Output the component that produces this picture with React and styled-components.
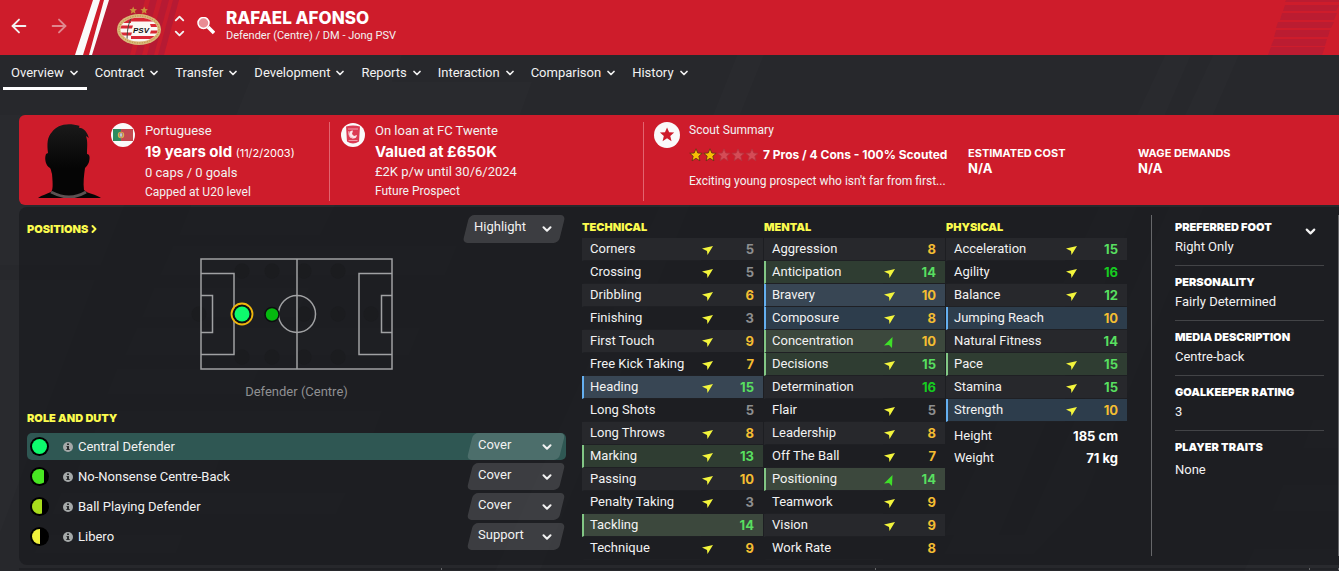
import React from 'react';
import styled, { createGlobalStyle } from 'styled-components';
import { ArrowLeft, ArrowRight, ChevronDown, ChevronRight, ChevronUp } from 'lucide-react';

const red = '#ce1c2b';
const yellow = '#fbfb4e';

const GlobalStyle = createGlobalStyle`
	* { box-sizing: border-box; }
	body {
		margin: 0;
		background: #27282c;
		color: #f2f2f2;
		font: 400 13px/20px Roboto, 'Liberation Sans', sans-serif;
		overflow: hidden;
	}
	h1, h2, h3, p, ul, dl, dd { margin: 0; padding: 0; }
	button, select {
		background: none;
		border: 0;
		padding: 0;
		color: inherit;
		font: inherit;
		cursor: pointer;
	}
	a { color: inherit; text-decoration: none; }
`;

const Page = styled.div`
	position: relative;
	min-height: 100vh;
`;

const Backdrop = styled.svg`
	position: absolute;
	top: 0;
	${props => props.$right ? 'right: 0;' : 'left: 0;'}
	pointer-events: none;
`;

/* Header */

const Header = styled.header`
	position: relative;
	height: 55px;
	background: ${red};
	overflow: hidden;
`;

const HeaderRow = styled.div`
	position: relative;
	display: flex;
	align-items: center;
	height: 100%;
	padding-left: 8px;
`;

const IconButton = styled.button`
	display: flex;
	opacity: ${props => props.$dim ? 0.5 : 1};
`;

const History = styled.div`
	display: flex;
	gap: 18px;
	margin-right: 47px;
	padding-bottom: 4px;
`;

const Stepper = styled.div`
	display: flex;
	flex-direction: column;
	margin: 0 10px 0 11px;
	padding-bottom: 4px;
`;

const Title = styled.div`
	margin-left: 11px;
	padding-bottom: 4px;
`;

const Name = styled.h1`
	font: 800 17px/20px Inter, 'Liberation Sans', sans-serif;
	color: #fff;
`;

const Subtitle = styled.p`
	font-size: 11px;
	line-height: 16px;
`;

/* Tabs */

const Tabs = styled.nav`
	position: relative;
	display: flex;
	height: 60px;
	padding-left: 3px;
`;

const Tab = styled.a`
	display: flex;
	align-items: center;
	gap: 4px;
	height: 35px;
	padding: 3px 7px 0 8px;
	border-bottom: 3px solid ${props => props.$active ? '#fff' : 'transparent'};
`;

/* Summary card */

const Summary = styled.section`
	position: relative;
	display: grid;
	grid-template-columns: 311fr 314fr 324fr 170fr 201fr;
	height: 90px;
	margin-left: 19px;
	padding: 7px 0;
	background: ${red};
	border-radius: 6px 0 0 6px;
`;

const Section = styled.div`
	display: flex;
	align-items: flex-start;
	gap: ${props => props.$gap || 10}px;
	padding-left: ${props => props.$pad || 10}px;
	min-width: 0;
	border-right: ${props => props.$divided ? '1px solid #e2646f' : '0'};
	& > svg { flex: none; }
`;

const Lines = styled.div`
	display: flex;
	flex-direction: column;
	min-width: 0;
	margin-top: -1px;
	white-space: nowrap;
`;

const Small = styled.span`
	font-size: 12px;
	font-weight: 400;
	line-height: ${props => props.$tall ? 22 : 18}px;
`;

const Strong = styled.strong`
	font: 700 15px/21px Inter, 'Liberation Sans', sans-serif;
	color: #fff;
	& span { font: 400 12px/20px Inter, sans-serif; font-size: 11px; }
`;

const Rating = styled.div`
	display: flex;
	align-items: center;
	gap: 5px;
	height: 30px;
	margin-top: 1px;
	font: 700 12px/20px Inter, 'Liberation Sans', sans-serif;
	color: #fff;
`;

const Cost = styled.dl`
	padding-top: 24px;
	font: 700 12px/15px Inter, 'Liberation Sans', sans-serif;
	color: #fff;
	& dt { font-size: 11px; }
	& dd { font-size: 13px; }
`;

/* Main panel */

const Panel = styled.main`
	position: relative;
	display: grid;
	grid-template-columns: minmax(0, 539fr) minmax(0, 545fr) 196px;
	column-gap: 16px;
	margin: 2px 0 0 19px;
	padding: 8px 0 5px 8px;
	background: rgba(22, 23, 27, 0.56);
	border-radius: 8px 0 0 8px;
`;

const Heading = styled.h2`
	display: flex;
	align-items: center;
	font: 900 11px/24px Inter, 'Liberation Sans', sans-serif;
	color: ${yellow};
`;

const Top = styled.div`
	display: flex;
	justify-content: space-between;
	padding-right: 2px;
`;

const Slanted = styled.div`
	position: relative;
	display: flex;
	align-items: center;
	width: ${props => props.$wide ? 100 : 96}px;
	height: ${props => props.$wide ? 28 : 27}px;
	&::before {
		content: '';
		position: absolute;
		inset: 0 2px;
		border-radius: 5px;
		background: rgba(255, 255, 255, 0.14);
		transform: skewX(-14deg);
	}
	& svg {
		position: absolute;
		right: 10px;
		pointer-events: none;
	}
`;

const Select = styled.select`
	position: relative;
	appearance: none;
	width: 100%;
	height: 100%;
	padding: 0 0 4px 10px;
	outline: none;
	& option { color: #222; }
`;

const Pitch = styled.figure`
	display: flex;
	flex-direction: column;
	align-items: center;
	margin: 15px 0 4px;
	color: #8f9092;
	& figcaption { margin-top: 12px; }
`;

const Roles = styled.ul`
	display: flex;
	flex-direction: column;
	gap: 3px;
	margin-top: 3px;
	list-style: none;
`;

const Role = styled.li`
	display: flex;
	align-items: center;
	height: 27px;
	padding: 0 2px 0 3px;
	border-radius: 5px;
	background: ${props => props.$selected ? '#2f5753' : 'none'};
	& > svg { margin-right: 14px; }
	& > svg + svg { margin-right: 5px; }
	& > span { flex: 1; }
`;

const Attributes = styled.div`
	display: grid;
	grid-template-columns: repeat(3, minmax(0, 1fr));
	column-gap: 1px;
`;

const tones = {
	green: ['#3c483d', '#2f3d32', '#82c785'],
	blue: ['#384654', '#2d3d4c', '#64aff0'],
	none: ['#27282c', 'transparent', 'transparent'],
};

const Table = styled.table`
	width: 100%;
	margin-top: -1px;
	border-spacing: 0;
	table-layout: fixed;
`;

const AttrRow = styled.tr`
	& th, & td {
		height: 23px;
		padding: 0;
		border-bottom: 1px solid transparent;
		background: ${props => tones[props.$tone][props.$odd ? 1 : 0]} padding-box;
		line-height: 20px;
		text-align: left;
	}
	& th {
		width: 119px;
		padding-left: 6px;
		border-left: 2px solid ${props => props.$tone === 'none' && !props.$odd ? '#27282c' : tones[props.$tone][2]};
		border-bottom: 1px solid #1f2024;
		font-weight: 400;
		white-space: nowrap;
	}
	& td svg { display: block; margin: 3px 0 0 1px; }
`;

const Value = styled.td`
	&& {
		padding-right: 9px;
		font: 700 13px/20px Inter, 'Liberation Sans', sans-serif;
		text-align: right;
		color: ${props => props.$value > 15 ? '#16cb20' : props.$value > 10 ? '#58df60' : props.$value > 5 ? '#f4bd32' : '#8e8f90'};
	}
`;

const Body = styled.dl`
	margin: 3px 9px 0 8px;
	& div {
		display: flex;
		justify-content: space-between;
		line-height: 22px;
	}
	& dd { font: 700 13px/22px Inter, sans-serif; color: #fff; }
`;

const Sidebar = styled.aside`
	margin-left: 8px;
	margin-bottom: 4px;
	padding: 0 14px 0 23px;
	border-left: 1px solid #66676a;
	border-right: 1px solid #66676a;
`;

const Fact = styled.section`
	display: flex;
	justify-content: space-between;
	align-items: flex-start;
	height: ${props => props.$first ? 51 : 55}px;
	padding-top: ${props => props.$first ? 4 : 8}px;
	border-bottom: ${props => props.$last ? '0' : '1px solid #434447'};
	& h3 { font: 900 11px/16px Inter, 'Liberation Sans', sans-serif; color: #fff; }
	& p { line-height: ${props => props.$last ? 30 : 24}px; }
	& button { margin: 5px 6px 0 0; }
`;

const BottomPanels = styled.div`
	display: grid;
	grid-template-columns: 423fr 434fr 434fr 29px;
	height: 2px;
	margin: 3px 0 0 19px;
	& div { border-right: 1px solid #66676a; background: #1f2024; }
`;

const Chevron = ({ size = 12 }) => <ChevronDown size={size} strokeWidth={3.5} />;

const tabs = ['Overview', 'Contract', 'Transfer', 'Development', 'Reports', 'Interaction', 'Comparison', 'History'];

// name, value, trend, highlight
const technical = [
	['Corners', 5, 'steady'],
	['Crossing', 5, 'steady'],
	['Dribbling', 6, 'steady'],
	['Finishing', 3, 'steady'],
	['First Touch', 9, 'steady'],
	['Free Kick Taking', 7, 'steady'],
	['Heading', 15, 'steady', 'blue'],
	['Long Shots', 5],
	['Long Throws', 8, 'steady'],
	['Marking', 13, 'steady', 'green'],
	['Passing', 10, 'steady'],
	['Penalty Taking', 3, 'steady'],
	['Tackling', 14, null, 'green'],
	['Technique', 9, 'steady'],
];

const mental = [
	['Aggression', 8],
	['Anticipation', 14, 'steady', 'green'],
	['Bravery', 10, 'steady', 'blue'],
	['Composure', 8, 'steady', 'blue'],
	['Concentration', 10, 'up', 'green'],
	['Decisions', 15, 'steady', 'green'],
	['Determination', 16],
	['Flair', 5, 'steady'],
	['Leadership', 8, 'steady'],
	['Off The Ball', 7, 'steady'],
	['Positioning', 14, 'up', 'green'],
	['Teamwork', 9, 'steady'],
	['Vision', 9, 'steady'],
	['Work Rate', 8],
];

const physical = [
	['Acceleration', 15, 'steady'],
	['Agility', 16, 'steady'],
	['Balance', 12, 'steady'],
	['Jumping Reach', 10, null, 'blue'],
	['Natural Fitness', 14],
	['Pace', 15, 'steady', 'green'],
	['Stamina', 15, 'steady'],
	['Strength', 10, 'steady', 'blue'],
];

// fill is how far the suitability disc is coloured, from the left
const roles = [
	{ name: 'Central Defender', duty: 'Cover', color: '#0dfb6d', fill: 15 },
	{ name: 'No-Nonsense Centre-Back', duty: 'Cover', color: '#48e622', fill: 12 },
	{ name: 'Ball Playing Defender', duty: 'Cover', color: '#a9dd1c', fill: 10 },
	{ name: 'Libero', duty: 'Support', color: '#eff03b', fill: 8 },
];

const facts = [
	['PREFERRED FOOT', 'Right Only'],
	['PERSONALITY', 'Fairly Determined'],
	['MEDIA DESCRIPTION', 'Centre-back'],
	['GOALKEEPER RATING', '3'],
	['PLAYER TRAITS', 'None'],
];

const STAR = 'M7 0.8 8.8 5 13.2 5.3 9.8 8.2 10.9 12.8 7 10.3 3.1 12.8 4.2 8.2 0.8 5.3 5.2 5Z';

const Trend = ({ dir }) => {
	if (!dir) return null;
	return (
		<svg width="12" height="11" viewBox="0 0 12 11">
			{dir === 'up'
				? <path d="M0 8.500 8.500 0 8 11 5 8Z" fill="#3fe029" />
				: <path d="M0 3.500 11 1 5.500 10 5 6Z" fill="#f3f53c" />}
		</svg>
	);
};

const ClubBadge = () => (
	<svg width="44" height="44" viewBox="1 0 44 44">
		<g fill="#c9913c">
			<path transform="translate(13 0) scale(.6)" d={STAR} />
			<path transform="translate(24 0) scale(.6)" d={STAR} />
		</g>
		<g transform="translate(23 23.500)">
			<ellipse rx="22" ry="15.5" fill="#d9b878" />
			<ellipse rx="20" ry="13.5" fill="none" stroke="#b8893f" strokeWidth="1" strokeDasharray="1 1.5" />
			<clipPath id="badge"><ellipse rx="18.5" ry="12" /></clipPath>
			<g clipPath="url(#badge)">
				<rect x="-20" y="-14" width="40" height="28" fill="#fbf7f4" />
				<path d="M-20-12h40v4h-40zM-20-4h14l-1 3h-13zM-20 3h13l-1 3h-12zM-8 6.5h28v3h-28zM-18-8.500h10v2h-10zM11-5.500h9v3h-8zM12 1h9v3h-10z" fill="#d92834" />
				<path d="M-7-13c-4 7-5 15-5 26" stroke="#4f4740" strokeWidth="1" fill="none" />
			</g>
			<text x="2" y="3" textAnchor="middle" fontFamily="Liberation Sans, sans-serif" fontWeight="700" fontStyle="italic" fontSize="8" fill="#111">PSV</text>
		</g>
	</svg>
);

const Silhouette = () => (
	<svg width="63" height="76" viewBox="0 -2 63 76">
		<defs>
			<linearGradient id="head" x1="0" y1="0" x2="0" y2="1">
				<stop offset="0" stopColor="#1a1a1a" />
				<stop offset=".6" stopColor="#050505" />
			</linearGradient>
		</defs>
		<path fill="url(#head)" d="M0 74c4-3 9-4 13-6 2-2 2-7 1-18-1-3-1-5-2-6-4-2-6-9-4-14l2-1C9 20 9 13 14 8 19 1 29-2 42 2c-2 1-1 2 1 2 5 2 6 5 8 10l-3-2c2 6 1 11 1 18 3 0 3 4 2 8-1 3-3 5-4 6-1 7-2 15-1 22 4 4 12 4 17 8z" />
		<path fill="none" stroke="#5c5152" strokeWidth="3" d="M13 68c6 3 12 5 18 5s12-2 17-5" />
	</svg>
);

const Flag = () => (
	<svg width="24" height="25" viewBox="0 -1 24 25">
		<circle cx="12" cy="12" r="12" fill="#fafafa" />
		<path d="M2 6h20v12H2z" fill="#c34950" />
		<path d="M2 6h8v12H2z" fill="#2f8b5f" />
		<circle cx="10" cy="12" r="3.2" fill="#d7b750" />
		<path d="M8.500 10h3v3l-1.500 1.500-1.500-1.500z" fill="#bfc8d6" stroke="#a24a4c" strokeWidth=".5" />
	</svg>
);

const LoanBadge = () => (
	<svg width="24" height="25" viewBox="0 -1 24 25">
		<circle cx="12" cy="12" r="12" fill="#fafafa" />
		<path d="M5 3.500q7-2 14 0l-1 15q-6 4-12 0z" fill="#dc3b54" />
		<path d="M7 6h10M7.500 17.500h9" stroke="#f09aa8" />
		<path d="M12 7.500a4 4 0 1 0 4 4.500l-3 1-2-2z" fill="#fbe6ea" />
		<path d="M8 8c-1 3 0 6 4 7" stroke="#f4b8c2" fill="none" />
	</svg>
);

const ScoutBadge = () => (
	<svg width="26" height="26" viewBox="0 0 26 26">
		<circle cx="13" cy="13" r="13" fill="#fafafa" />
		<path transform="translate(5 4.500) scale(1.150)" d={STAR} fill={red} />
	</svg>
);

const Stars = () => (
	<svg width="69" height="14" viewBox="0 0 69 14" role="img" aria-label="2 out of 5 stars">
		{[0, 1, 2, 3, 4].map(i => (
			<path key={i} transform={`translate(${i * 14} 0)`} d={STAR}
				fill={i < 2 ? '#f8bd05' : '#d54b56'} stroke={i < 2 ? '#5a3113' : '#b5343f'} strokeWidth=".8" />
		))}
	</svg>
);

const PitchDrawing = () => (
	<svg width="193" height="112" viewBox="0 0 193 112" overflow="visible">
		<g fill="#1b1c1f">
			{[42, 72, 104, 138].map(x => <circle key={x} cx={x} cy="13" r="7.500" />)}
			{[42, 72, 104, 138].map(x => <circle key={x} cx={x} cy="99" r="7.500" />)}
			{[-1, 104, 138, 171].map(x => <circle key={x} cx={x} cy="56" r="7.500" />)}
		</g>
		<g fill="none" stroke="#a0a1a3" strokeWidth="1.500">
			<rect x="1" y="1" width="191" height="110" />
			<path d="M97 1v110M1 15.500h33v81H1M1 37.500h11.500v37H1M192 15.500h-33v81h33M192 37.500h-10.500v37h10.500" />
			<circle cx="97" cy="56" r="18.500" />
		</g>
		<circle cx="42" cy="56" r="9.500" fill="#0d0e10" />
		<circle cx="42" cy="56" r="10.500" fill="none" stroke="#f0b60c" strokeWidth="1.800" />
		<circle cx="42" cy="56" r="7.500" fill="#0dfb6d" />
		<circle cx="72" cy="56.500" r="7" fill="#05b80f" stroke="#0d0e10" strokeWidth="1.500" />
	</svg>
);

const Disc = ({ color, fill }) => (
	<svg width="19" height="19" viewBox="0 0 19 19">
		<circle cx="9.500" cy="9.500" r="9.500" fill="#000" />
		<clipPath id={`disc${fill}`}><rect x="2" y="0" width={fill} height="19" /></clipPath>
		<circle cx="9.500" cy="9.500" r="7.500" fill={color} clipPath={`url(#disc${fill})`} />
	</svg>
);

const Info = () => (
	<svg width="10" height="10" viewBox="0 0 10 10">
		<circle cx="5" cy="5" r="5" fill="#a5a9a9" />
		<path d="M4 1.500h2V3H4zM3.500 4H6v3h.7v1H3.300V7H4V5h-.5z" fill="#2b2d2f" />
	</svg>
);

const AttributeTable = ({ title, rows, children }) => (
	<section>
		<Heading>{title}</Heading>
		<Table aria-label={title}>
			<tbody>
				{rows.map(([name, value, trend, tone = 'none'], i) => (
					<AttrRow key={name} $tone={tone} $odd={i % 2 === 1}>
						<th scope="row">{name}</th>
						<td><Trend dir={trend} /></td>
						<Value $value={value}>{value}</Value>
					</AttrRow>
				))}
			</tbody>
		</Table>
		{children}
	</section>
);

const Dropdown = ({ label, value, wide }) => (
	<Slanted $wide={wide}>
		<Select aria-label={label} defaultValue={value}>
			<option>{value}</option>
		</Select>
		<Chevron size={14} />
	</Slanted>
);

export default function App() {
	return (
		<Page>
			<GlobalStyle />
			{/* faint slanted bars behind the whole page */}
			<Backdrop width="780" height="571">
				<g fill="#fff" fillOpacity=".013">
					<path d="M260 55h142l-10 27h140l-12 33H236zM737 55h27l-24 60h-27zM0 115h160l-59 150H0zM0 280h95L-10 560H0z" />
					<path d="M191 205h144l-15 30H179zM173 246h284l-12 29H160zM154 288h155l-13 29H142zM137 328h283l-11 27H125zM117 369h142l-11 25H107zM102 411h280l-10 27H92zM84 452h138l-9 27H74zM61 493h285l-10 21H52zM44 535h139l-7 18H34z" />
					<path d="M660 205h30L540 571h-45z" />
				</g>
			</Backdrop>
			<Backdrop $right width="480" height="571">
				<path fill="#fff" fillOpacity=".013" d="M306 55h26l-26 60h-28zM354 55h26l-26 60h-28zM240 207h38L140 535H85zM310 207h35L225 500l-50 54H85l10-19h70zM454 420h26v28h-36zM424 485h56v26h-67zM395 549h85v22h-95z" />
			</Backdrop>

			<Header>
				<Backdrop width="200" height="55">
					<path d="M109 0h70l-15 55H91z" fill="#b61a33" />
					<path d="M145 0h5l-15 55h-5zM157 0h5l-15 55h-5zM169 0h4l-15 55h-4z" fill="#c81c2d" />
					<path d="M93 0h7L83 55h-8zM104 0h5L92 55h-3z" fill="#fafafa" />
				</Backdrop>
				<Backdrop $right width="72" height="55">
					<path d="M19 0h53v2H18zM18 5h54l-3 6H16zM15 13h55l-3 7H13zM11 22h56l-3 6H9zM9 30h54l-2 7H7zM7 39h53l-2 7H4zM4 47h54l-3 8H1z" fill="#bb1c31" />
				</Backdrop>
				<HeaderRow>
					<History>
						<IconButton aria-label="Back"><ArrowLeft size={22} strokeWidth={2} /></IconButton>
						<IconButton aria-label="Forward" $dim><ArrowRight size={22} strokeWidth={2} /></IconButton>
					</History>
					<ClubBadge />
					<Stepper>
						<IconButton aria-label="Previous player"><ChevronUp size={15} strokeWidth={3} /></IconButton>
						<IconButton aria-label="Next player"><ChevronDown size={15} strokeWidth={3} /></IconButton>
					</Stepper>
					<IconButton aria-label="Search">
						<svg width="18" height="22" viewBox="0 1 18 22">
							<path d="M11 11l6 6" stroke="#fff" strokeWidth="3.500" />
							<circle cx="6.500" cy="7" r="5.500" fill="#e98c94" stroke="#fff" strokeWidth="1.500" />
						</svg>
					</IconButton>
					<Title>
						<Name>RAFAEL AFONSO</Name>
						<Subtitle>Defender (Centre) / DM - Jong PSV</Subtitle>
					</Title>
				</HeaderRow>
			</Header>

			<Tabs>
				{tabs.map((tab, i) => (
					<Tab href="#" key={tab} $active={i === 0}>{tab}<Chevron /></Tab>
				))}
			</Tabs>

			<Summary>
				<Section $pad={19} $divided>
					<Silhouette />
					<Flag />
					<Lines>
						<span>Portuguese</span>
						<Strong>19 years old <span>(11/2/2003)</span></Strong>
						<span>0 caps / 0 goals</span>
						<Small>Capped at U20 level</Small>
					</Lines>
				</Section>
				<Section $pad={11} $divided>
					<LoanBadge />
					<Lines>
						<span>On loan at FC Twente</span>
						<Strong>Valued at £650K</Strong>
						<span>£2K p/w until 30/6/2024</span>
						<Small>Future Prospect</Small>
					</Lines>
				</Section>
				<Section $pad={10} $gap={9}>
					<ScoutBadge />
					<Lines>
						<Small>Scout Summary</Small>
						<Rating><Stars />7 Pros / 4 Cons - 100% Scouted</Rating>
						<Small $tall>Exciting young prospect who isn't far from first...</Small>
					</Lines>
				</Section>
				<Cost><dt>ESTIMATED COST</dt><dd>N/A</dd></Cost>
				<Cost><dt>WAGE DEMANDS</dt><dd>N/A</dd></Cost>
			</Summary>

			<Panel>
				<section>
					<Top>
						<Heading as="a" href="#">POSITIONS <ChevronRight size={12} strokeWidth={4} /></Heading>
						<Dropdown label="Highlight" value="Highlight" wide />
					</Top>
					<Pitch>
						<PitchDrawing />
						<figcaption>Defender (Centre)</figcaption>
					</Pitch>
					<Heading>ROLE AND DUTY</Heading>
					<Roles>
						{roles.map((role, i) => (
							<Role key={role.name} $selected={i === 0}>
								<Disc color={role.color} fill={role.fill} />
								<Info />
								<span>{role.name}</span>
								<Dropdown label={`${role.name} duty`} value={role.duty} />
							</Role>
						))}
					</Roles>
				</section>

				<Attributes>
					<AttributeTable title="TECHNICAL" rows={technical} />
					<AttributeTable title="MENTAL" rows={mental} />
					<AttributeTable title="PHYSICAL" rows={physical}>
						<Body>
							<div><dt>Height</dt><dd>185 cm</dd></div>
							<div><dt>Weight</dt><dd>71 kg</dd></div>
						</Body>
					</AttributeTable>
				</Attributes>

				<Sidebar>
					{facts.map(([title, text], i) => (
						<Fact key={title} $first={i === 0} $last={i === facts.length - 1}>
							<div>
								<h3>{title}</h3>
								<p>{text}</p>
							</div>
							{i === 0 && <IconButton aria-label="More details"><Chevron size={15} /></IconButton>}
						</Fact>
					))}
				</Sidebar>
			</Panel>

			<BottomPanels><div /><div /><div /><div /></BottomPanels>
		</Page>
	);
}
